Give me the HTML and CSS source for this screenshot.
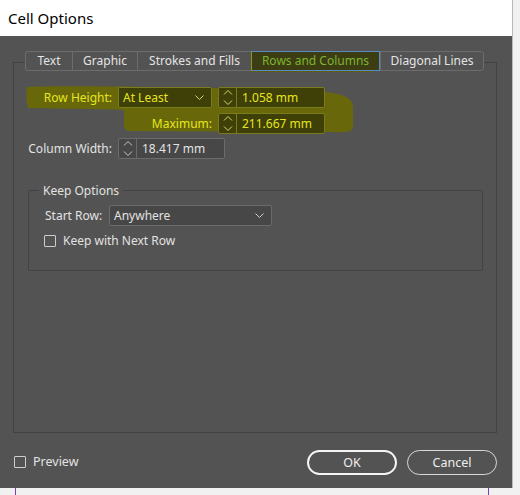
FILE: index.html
```html
<!DOCTYPE html>
<html>
<head>
<meta charset="utf-8">
<link rel="stylesheet" href="styles.css">
</head>
<body>
<div class="window">
  <div class="titlebar">Cell Options</div>
  <div class="client">
    <div class="panel">
      <svg class="marker" width="360" height="90" viewBox="14 63 360 90">
        <path d="M27 87 C80 85 200 88 300 90 C340 92 352 96 353 106 L353 127 C352 132 345 133 330 132 L132 131 C126 131 124 129 124 125 L124 110 C100 109 60 109 28 108 C26 100 26 92 27 87 Z" fill="#68680b"/>
        <path d="M250 49 L373 49 L373 72 L250 72 Z" fill="#5d5e12"/>
      </svg>
      <div class="tabs">
        <div class="tab w1">Text</div>
        <div class="tab w2">Graphic</div>
        <div class="tab w3">Strokes and Fills</div>
        <div class="tab w4 active">Rows and Columns</div>
        <div class="tab w5">Diagonal Lines</div>
      </div>
      <div class="grid">
        <div class="lbl hl">Row Height:</div>
        <div class="select hlbox">
          <span>At Least</span>
          <svg class="chev" width="9" height="5" viewBox="0 0 9 5"><path d="M0.5 0.5 L4.5 4.5 L8.5 0.5" fill="none" stroke="#d6d66a"/></svg>
        </div>
        <div class="spin hlbox">
          <div class="arrows"><svg width="10" height="17" viewBox="0 0 10 17"><path d="M1 5.5 L5 1.5 L9 5.5 M1 11.5 L5 15.5 L9 11.5" fill="none" stroke="#d6d66a"/></svg></div>
          <div class="val">1.058 mm</div>
        </div>
        <div class="lbl hl span2">Maximum:</div>
        <div class="spin hlbox">
          <div class="arrows"><svg width="10" height="17" viewBox="0 0 10 17"><path d="M1 5.5 L5 1.5 L9 5.5 M1 11.5 L5 15.5 L9 11.5" fill="none" stroke="#d6d66a"/></svg></div>
          <div class="val">211.667 mm</div>
        </div>
        <div class="lbl">Column Width:</div>
        <div class="spin wide">
          <div class="arrows"><svg width="10" height="17" viewBox="0 0 10 17"><path d="M1 5.5 L5 1.5 L9 5.5 M1 11.5 L5 15.5 L9 11.5" fill="none" stroke="#c8c8c8"/></svg></div>
          <div class="val">18.417 mm</div>
        </div>
      </div>
      <div class="group">
        <div class="legend">Keep Options</div>
        <div class="grow">
          <span class="glbl">Start Row:</span>
          <div class="select sr">
            <span>Anywhere</span>
            <svg class="chev" width="9" height="5" viewBox="0 0 9 5"><path d="M0.5 0.5 L4.5 4.5 L8.5 0.5" fill="none" stroke="#cfcfcf"/></svg>
          </div>
        </div>
        <div class="check kw"><span class="box"></span><span>Keep with Next Row</span></div>
      </div>
    </div>
    <div class="footer">
      <div class="check pv"><span class="box"></span><span>Preview</span></div>
      <div class="btns">
        <div class="btn ok">OK</div>
        <div class="btn">Cancel</div>
      </div>
    </div>
  </div>
</div>
<div class="under"><i class="pline"></i><i class="pline right"></i></div>
</body>
</html>
```

FILE: styles.css
```css
* { box-sizing: border-box; }
html, body { margin: 0; padding: 0; }
body {
  width: 520px;
  height: 495px;
  overflow: hidden;
  background: #f1f1f1;
  font-family: "Noto Sans", "Open Sans", sans-serif;
  font-size: 12px;
  color: #e2e2e2;
}
.window {
  width: 513px;
  height: 488px;
  border-right: 1px solid #b9b9b9;
  display: flex;
  flex-direction: column;
}
.titlebar {
  height: 36px;
  background: #ffffff;
  color: #000;
  font-size: 15px;
  line-height: 36px;
  padding-left: 8px;
}
.client {
  flex: 1;
  background: #535353;
  padding-top: 26px;
}
.panel {
  position: relative;
  isolation: isolate;
  margin-left: 13px;
  width: 484px;
  height: 371px;
  border: 1px solid #424242;
}
.marker {
  position: absolute;
  left: 0;
  top: 0;
  z-index: 0;
}
.tabs {
  position: relative;
  z-index: 1;
  display: flex;
  margin-top: -12px;
  margin-left: 11px;
  height: 20px;
}
.tab {
  height: 20px;
  border: 1px solid #6c6c6c;
  border-right: none;
  background: #535353;
  text-align: center;
  line-height: 18px;
  color: #e4e4e4;
  white-space: nowrap;
}
.w1 { width: 47px; border-radius: 3px 0 0 3px; }
.w2 { width: 65px; }
.w3 { width: 114px; }
.w4 { width: 129px; }
.w5 { width: 104px; border-right: 1px solid #6c6c6c; border-radius: 0 3px 3px 0; }
.tab.active {
  background: #3c3d13;
  color: #7db42e;
  border-color: #5a8cc4;
  border-left: 1px solid #8b9a1f;
  border-right: 1px solid #5a8cc4;
}
.grid {
  position: relative;
  z-index: 1;
  margin-top: 16px;
  padding-left: 4px;
  display: grid;
  grid-template-columns: 94px 94px 107px;
  grid-auto-rows: 21px;
  column-gap: 6px;
  row-gap: 4.5px;
}
.lbl {
  text-align: right;
  line-height: 21px;
  white-space: nowrap;
  color: #e2e2e2;
}
.lbl.hl { color: #e6e61c; }
.span2 { grid-column: 1 / span 2; }
.select {
  display: flex;
  align-items: center;
  justify-content: space-between;
  height: 21px;
  border: 1px solid #6b6b6b;
  border-radius: 2px;
  background: #474747;
  padding: 0 7px 0 4px;
  color: #e2e2e2;
}
.chev { display: block; }
.spin {
  display: flex;
  height: 21px;
  border: 1px solid #6b6b6b;
  border-radius: 2px;
  background: #474747;
}
.spin.wide { grid-column: 2 / span 2; width: 107px; }
.arrows {
  width: 18px;
  border-right: 1px solid #6b6b6b;
  display: flex;
  align-items: center;
  justify-content: center;
}
.arrows svg { display: block; }
.val {
  padding-left: 5px;
  line-height: 19px;
  color: #e2e2e2;
}
.hlbox {
  background: #3f3f08;
  border-color: #7a7a1e;
  color: #e6e61c;
}
.hlbox .arrows { border-color: #7a7a1e; }
.hlbox .val { color: #e6e61c; }
.group {
  position: relative;
  z-index: 1;
  margin-top: 31px;
  margin-left: 14px;
  width: 455px;
  height: 81px;
  border: 1px solid #434343;
  border-radius: 2px;
}
.legend {
  width: max-content;
  margin-top: -9px;
  margin-left: 10px;
  padding: 0 4px;
  background: #535353;
  line-height: 17px;
  color: #e2e2e2;
}
.grow {
  display: flex;
  align-items: center;
  margin-top: 6px;
  padding-left: 16px;
}
.glbl { width: 64px; white-space: nowrap; }
.select.sr { width: 163px; padding-left: 4px; }
.check {
  display: flex;
  align-items: center;
  gap: 7px;
  color: #e2e2e2;
}
.box {
  width: 12px;
  height: 12px;
  border: 1px solid #cdcdcd;
  border-radius: 1px;
}
.kw { margin-top: 6px; padding-left: 15px; }
.footer {
  display: flex;
  justify-content: space-between;
  align-items: flex-start;
  margin-top: 17px;
  padding: 0 15px 0 14px;
}
.pv { margin-top: 3px; font-size: 12.5px; }
.btns { display: flex; gap: 10px; }
.btn {
  width: 90px;
  height: 25px;
  border: 1px solid #d9d9d9;
  border-radius: 13px;
  text-align: center;
  line-height: 23px;
  font-size: 12.5px;
  color: #eeeeee;
}
.btn.ok {
  border: 2px solid #f4f4f4;
  line-height: 21px;
}
.under {
  display: flex;
  height: 7px;
  padding-left: 15px;
}
.pline {
  display: block;
  width: 1px;
  height: 7px;
  background: #7b3fb0;
}
.pline.right { margin-left: 472px; }
```
